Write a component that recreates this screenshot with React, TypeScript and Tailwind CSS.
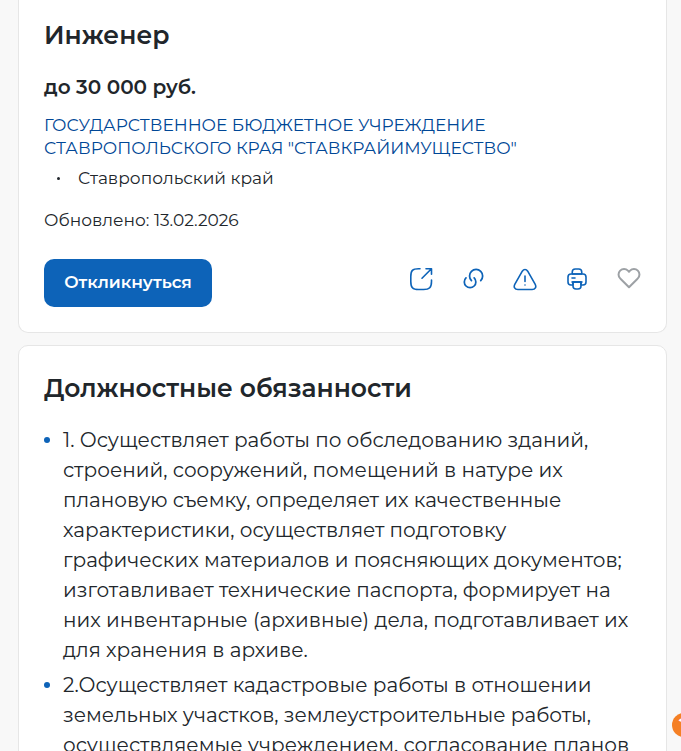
import type { ReactNode } from 'react';

const duties = [
    [
        '1. Осуществляет работы по обследованию зданий,',
        'строений, сооружений, помещений в натуре их',
        'плановую съемку, определяет их качественные',
        'характеристики, осуществляет подготовку',
        'графических материалов и поясняющих документов;',
        'изготавливает технические паспорта, формирует на',
        'них инвентарные (архивные) дела, подготавливает их',
        'для хранения в архиве.',
    ],
    [
        '2.Осуществляет кадастровые работы в отношении',
        'земельных участков, землеустроительные работы,',
        'осуществляемые учреждением, согласование планов',
    ],
];

interface IconButtonProps {
    label: string;
    viewBox?: string;
    className?: string;
    children: ReactNode;
}

function IconButton({ label, viewBox = '0 0 24 24', className = 'text-[#0d63b8]', children }: IconButtonProps) {
    return (
        <button type="button" aria-label={label} className={className}>
            <svg
                viewBox={viewBox}
                className="block size-6"
                fill="none"
                stroke="currentColor"
                strokeWidth="1.6"
                strokeLinecap="round"
                strokeLinejoin="round"
            >
                {children}
            </svg>
        </button>
    );
}

function Actions() {
    return (
        <div className="flex gap-7 pt-2">
            <IconButton label="Поделиться">
                <path d="M11 1.8H9.5C3.5 1.8 1.8 3.5 1.8 9.5v5c0 6 1.7 8 7.7 8h5c6 0 8-2 8-8V13" />
                <path d="M13 11.2l9.2-9.2M17 1.8h5.5v5.5" />
            </IconButton>
            <IconButton label="Скопировать ссылку" viewBox="1 1 22 22">
                <path d="M13.06 10.94c2.07 2.07 2.07 5.42 0 7.48s-5.42 2.07-7.48 0-2.07-5.42 0-7.48" />
                <path d="M10.59 13.41c-2.34-2.34-2.34-6.14 0-8.49s6.14-2.34 8.49 0 2.34 6.14 0 8.49" />
            </IconButton>
            <IconButton label="Пожаловаться">
                <path d="M9.3 4.2c1.5-2.3 3.9-2.3 5.4 0l7.4 12.9c1.6 3 .2 5.4-3 5.4H4.9c-3.2 0-4.6-2.4-3-5.4L9.3 4.2z" />
                <path d="M12 9v5.5M12 18h.01" />
            </IconButton>
            <IconButton label="Распечатать">
                <path d="M7.25 7h9.5V5c0-2-.75-3-3-3h-3.5c-2.25 0-3 1-3 3v2z" />
                <path d="M16 15v4c0 2-1 3-3 3h-2c-2 0-3-1-3-3v-4h8z" />
                <path d="M21 10v5c0 2-1 3-3 3h-2v-3H8v3H6c-2 0-3-1-3-3v-5c0-2 1-3 3-3h12c2 0 3 1 3 3z" />
                <path d="M17 15H7M7 11h3" />
            </IconButton>
            <IconButton label="В избранное" className="text-[#9da1a5]">
                <path
                    strokeWidth="2"
                    d="M20.84 3.61a5.5 5.5 0 0 0-7.78 0L12 4.67l-1.06-1.06a5.5 5.5 0 0 0-7.78 7.78l1.06 1.06L12 20.23l7.78-7.78 1.06-1.06a5.5 5.5 0 0 0 0-7.78z"
                />
            </IconButton>
        </div>
    );
}

export default function App() {
    return (
        <div className="relative h-screen overflow-hidden bg-[#f8f8f8] pl-[18px] pr-3.5 font-['Montserrat','Inter',sans-serif] text-[#21262b]">
            <main className="flex flex-col gap-3">
                <section className="rounded-b-[10px] border-x border-b border-[#e6e6e6] bg-white px-[25px] pt-5 pb-[25px]">
                    <h1 className="text-[25px] leading-[30px] font-semibold">Инженер</h1>
                    <p className="mt-[22px] text-xl leading-[30px] font-semibold">до 30 000 руб.</p>
                    <a href="#company" className="mt-3 block text-[17px] leading-[23px] text-[#004796]">
                        ГОСУДАРСТВЕННОЕ БЮДЖЕТНОЕ УЧРЕЖДЕНИЕ
                        <br />
                        СТАВРОПОЛЬСКОГО КРАЯ "СТАВКРАЙИМУЩЕСТВО"
                    </a>
                    <ul className="mt-1.5 text-[17px] leading-6">
                        <li className="flex items-center gap-[18px] pl-[13px]">
                            <span className="size-[3px] rounded-full bg-current" />
                            Ставропольский край
                        </li>
                    </ul>
                    <p className="mt-[18px] text-[17px] leading-6">Обновлено: 13.02.2026</p>
                    <div className="mt-[27px] flex items-start justify-between">
                        <button type="button" className="h-12 w-[168px] rounded-[10px] bg-[#0d63b8] text-[17px] font-semibold text-white">
                            Откликнуться
                        </button>
                        <Actions />
                    </div>
                </section>

                <section className="rounded-[10px] border border-[#e6e6e6] bg-white px-[25px] py-6">
                    <h2 className="text-[25px] leading-9 font-semibold">Должностные обязанности</h2>
                    <ul className="mt-[19px] flex flex-col gap-[5px] text-xl leading-[30px]">
                        {duties.map((lines) => (
                            <li key={lines[0]} className="flex gap-[13px]">
                                <span className="mt-3 size-1.5 shrink-0 rounded-full bg-[#0d63b8]" />
                                <p>
                                    {lines.map((line) => (
                                        <span key={line} className="block whitespace-nowrap">
                                            {line}
                                        </span>
                                    ))}
                                </p>
                            </li>
                        ))}
                    </ul>
                </section>
            </main>

            <button
                type="button"
                aria-label="Помощь"
                className="absolute -right-[15px] bottom-3.5 size-6 rounded-full bg-[#f58025] text-lg leading-6 font-bold text-white"
            >
                ?
            </button>
        </div>
    );
}
